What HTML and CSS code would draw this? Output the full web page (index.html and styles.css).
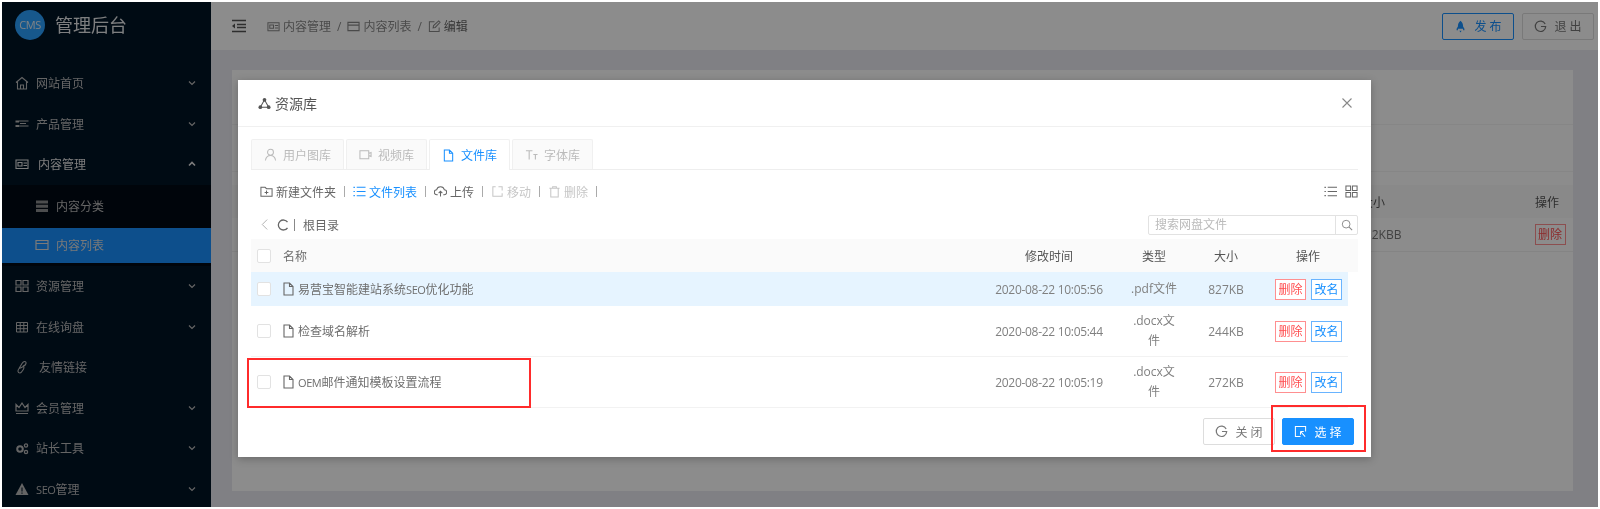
FILE: index.html
```html
<!DOCTYPE html>
<html lang="zh-CN">
<head>
<meta charset="utf-8">
<title>资源库</title>
<link rel="stylesheet" href="styles.css">
</head>
<body>
<svg class="sprite" xmlns="http://www.w3.org/2000/svg">
  <symbol id="i-file" viewBox="2 0 11 14"><path d="M3 1h5.500L12 4.500V13H3zM8.500 1v3.500H12" fill="none" stroke="currentColor" stroke-width="1.100"/></symbol>
  <symbol id="i-down" viewBox="0 0 10 10"><path d="M2 3.500 5 6.500 8 3.500" fill="none" stroke="currentColor" stroke-width="1.200"/></symbol>
  <symbol id="i-up" viewBox="0 0 10 10"><path d="M2 6.500 5 3.500 8 6.500" fill="none" stroke="currentColor" stroke-width="1.600"/></symbol>
  <symbol id="i-box" viewBox="0 0 14 14"><path d="M1 3h12v8.500H1zM3 5.500h4v3.500H3zM8.500 6H12M8.500 8.500H12" fill="none" stroke="currentColor" stroke-width="1.100"/></symbol>
  <symbol id="i-table" viewBox="0 0 14 14"><path d="M1 2.500h12v9H1zM1 5.500h12" fill="none" stroke="currentColor" stroke-width="1.200"/></symbol>
  <symbol id="i-exit" viewBox="0 0 14 14"><path d="M12 4.200A5.600 5.600 0 1 0 12.600 7H7.500" fill="none" stroke="currentColor" stroke-width="1.300"/></symbol>
</svg>
<div class="app">
  <aside class="sider">
    <div class="brand">
      <span class="brand-logo">CMS</span>
      <span class="brand-name">管理后台</span>
    </div>
    <a class="nav-item">
      <svg class="nav-icon" viewBox="0 0 14 14"><path d="M1 6.500 7 1.500l6 5M2.500 5.500V13h9V5.500M5.500 13V9h3v4" fill="none" stroke="currentColor" stroke-width="1.100"/></svg>
      <span class="nav-label">网站首页</span>
      <svg class="nav-arrow"><use href="#i-down"/></svg>
    </a>
    <a class="nav-item">
      <svg class="nav-icon" viewBox="0 0 14 14"><path d="M.5 3.500h3.500v2H.5zM.5 8h3.500v2H.5z" fill="currentColor"/><path d="M4 4h9.500M5 6.500h6M4 9h9.500" stroke="currentColor" stroke-width="1.100"/></svg>
      <span class="nav-label">产品管理</span>
      <svg class="nav-arrow"><use href="#i-down"/></svg>
    </a>
    <a class="nav-item nav-open">
      <svg class="nav-icon"><use href="#i-box"/></svg>
      <span class="nav-label">内容管理</span>
      <svg class="nav-arrow"><use href="#i-up"/></svg>
    </a>
    <div class="submenu">
      <a class="sub-item">
        <svg class="nav-icon" viewBox="0 0 14 14"><path d="M1 1.500h12v3H1zM1 5.700h12v3H1zM1 9.900h12v3H1z" fill="currentColor" opacity=".75"/></svg>
        <span>内容分类</span>
      </a>
      <a class="sub-item sub-active">
        <svg class="nav-icon"><use href="#i-table"/></svg>
        <span>内容列表</span>
      </a>
    </div>
    <a class="nav-item">
      <svg class="nav-icon" viewBox="0 0 14 14"><path d="M1 1.500h5v4.500H1zM8 1.500h5v4.500H8zM1 8h5v4.500H1zM8 8h5v4.500H8z" fill="none" stroke="currentColor" stroke-width="1.200"/></svg>
      <span class="nav-label">资源管理</span>
      <svg class="nav-arrow"><use href="#i-down"/></svg>
    </a>
    <a class="nav-item">
      <svg class="nav-icon" viewBox="0 0 14 14"><path d="M1.500 2.500h11v9.500h-11zM1.500 5.500h11M1.500 8.700h11M5.200 2.500V12M8.800 2.500V12" fill="none" stroke="currentColor"/></svg>
      <span class="nav-label">在线询盘</span>
      <svg class="nav-arrow"><use href="#i-down"/></svg>
    </a>
    <a class="nav-item nav-link">
      <svg class="nav-icon" viewBox="0 0 14 14"><path d="M5 13c-2.500 0-2.500-2.500-1-4.500l3-5C8.500 1 11.500.8 11 3.500 10.500 5.500 6.500 8 4 8.500M8 5.500c1.500 1 1 3-.2 4.800C6.800 12 6 13 5 13" fill="none" stroke="currentColor" stroke-width="1.100"/></svg>
      <span class="nav-label">友情链接</span>
    </a>
    <a class="nav-item">
      <svg class="nav-icon" viewBox="0 0 14 14"><path d="M1 3.500 4 6.500 7 2l3 4.500 3-3V10H1zM1 12.500h12" fill="none" stroke="currentColor" stroke-width="1.200"/></svg>
      <span class="nav-label">会员管理</span>
      <svg class="nav-arrow"><use href="#i-down"/></svg>
    </a>
    <a class="nav-item">
      <svg class="nav-icon" viewBox="0 0 14 14"><circle cx="5" cy="8" r="2.800" fill="none" stroke="currentColor" stroke-width="2"/><circle cx="11" cy="4.500" r="1.600" fill="none" stroke="currentColor" stroke-width="1.300"/><circle cx="11" cy="11" r="1.600" fill="none" stroke="currentColor" stroke-width="1.300"/></svg>
      <span class="nav-label">站长工具</span>
      <svg class="nav-arrow"><use href="#i-down"/></svg>
    </a>
    <a class="nav-item">
      <svg class="nav-icon" viewBox="0 0 14 14"><path d="M7 1 13.500 13H.5z" fill="currentColor"/><path d="M7 5.500v4M7 10.500v1.200" stroke="#011425" stroke-width="1.100"/></svg>
      <span class="nav-label"><span class="latin">SEO</span>管理</span>
      <svg class="nav-arrow"><use href="#i-down"/></svg>
    </a>
  </aside>

  <div class="main">
    <header class="topbar">
      <svg class="menu-toggle" viewBox="0 0 16 14"><path d="M1 1.500h14M6 5.500h9M6 8.500h9M1 12.500h14" stroke="currentColor" stroke-width="1.400"/><path d="M4 4.500v5L1 7z" fill="currentColor"/></svg>
      <nav class="crumbs">
        <svg class="crumb-icon"><use href="#i-box"/></svg><span>内容管理</span>
        <span class="crumb-sep">/</span>
        <svg class="crumb-icon"><use href="#i-table"/></svg><span>内容列表</span>
        <span class="crumb-sep">/</span>
        <svg class="crumb-icon" viewBox="0 0 14 14"><path d="M12 8v4.500H1.500V2H7M5.500 8.500 6 6l5.500-5 1.500 1.500L7.800 8z" fill="none" stroke="currentColor" stroke-width="1.100"/></svg><span class="crumb-last">编辑</span>
      </nav>
      <div class="top-actions">
        <button class="btn btn-outline-primary">
          <svg class="btn-icon" viewBox="0 0 14 14"><path d="M7 .8C9 2.500 9.800 4.500 9.800 7v2.500H4.200V7C4.200 4.500 5 2.500 7 .8zM4.200 7 2.800 9.500v1.500h1.400M9.800 7l1.400 2.500v1.500H9.800M5.800 11.500 7 13.500l1.200-2z" fill="currentColor"/></svg>
          <span>发 布</span>
        </button>
        <button class="btn">
          <svg class="btn-icon"><use href="#i-exit"/></svg>
          <span>退 出</span>
        </button>
      </div>
    </header>
    <main class="page">
      <section class="card">
        <div class="card-band card-band-title"></div>
        <div class="card-band card-band-tools"></div>
        <div class="bg-table">
          <div class="bg-row bg-head"><span class="bg-size">大小</span><span class="bg-op">操作</span></div>
          <div class="bg-row"><span class="bg-size-val">272KBB</span><span class="bg-op bg-op-btn"><span class="mini mini-red">删除</span></span></div>
        </div>
      </section>
    </main>
  </div>

  <div class="mask">
    <div class="modal">
      <div class="modal-head">
        <svg class="modal-icon" viewBox="0 0 14 14"><circle cx="7" cy="3" r="2" fill="currentColor"/><circle cx="2.500" cy="11" r="2" fill="currentColor"/><circle cx="11.500" cy="11" r="2" fill="currentColor"/><path d="M7 3 2.500 11h9z" fill="none" stroke="currentColor" stroke-width="1.100"/></svg>
        <span class="modal-title">资源库</span>
        <svg class="modal-close" viewBox="0 0 12 12"><path d="M1.500 1.500l9 9M10.500 1.500l-9 9" stroke="currentColor" stroke-width="1.100"/></svg>
      </div>
      <div class="modal-body">
        <div class="tabs">
          <div class="tab tab-a">
            <svg class="tab-icon" viewBox="0 0 14 14"><circle cx="7" cy="4.500" r="3.200" fill="none" stroke="currentColor" stroke-width="1.100"/><path d="M1.500 13.500c.5-3.500 2.500-5.500 5.500-5.500s5 2 5.500 5.500" fill="none" stroke="currentColor" stroke-width="1.100"/></svg>
            <span>用户图库</span>
          </div>
          <div class="tab tab-b">
            <svg class="tab-icon" viewBox="0 0 14 14"><path d="M1 3h9.500v8.500H1zM10.500 6 13 4.800v4.400L10.500 8" fill="none" stroke="currentColor" stroke-width="1.100"/></svg>
            <span>视频库</span>
          </div>
          <div class="tab tab-b tab-active">
            <svg class="tab-icon"><use href="#i-file"/></svg>
            <span>文件库</span>
          </div>
          <div class="tab tab-b">
            <svg class="tab-icon" viewBox="0 0 14 14"><path d="M1 3h7M4.500 3v9.500M9 7h4.500M11.200 7v5.500" fill="none" stroke="currentColor" stroke-width="1.200"/></svg>
            <span>字体库</span>
          </div>
        </div>

        <div class="toolbar">
          <span class="tool">
            <svg class="tool-icon" viewBox="0 0 14 14"><path d="M1 2.500h4.500L7 4h6v8H1zM7 6v4M5 8h4" fill="none" stroke="currentColor" stroke-width="1.100"/></svg>新建文件夹
          </span><i class="tool-sep"></i>
          <span class="tool tool-on">
            <svg class="tool-icon" viewBox="0 0 14 14"><path d="M4 2.500h9.500M4 7h9.500M4 11.500h9.500" stroke="currentColor" stroke-width="1.100"/><path d="M.5 2h1.500v1.200H.5zM.5 6.400h1.500v1.200H.5zM.5 10.900h1.500v1.200H.5z" fill="currentColor"/></svg>文件列表
          </span><i class="tool-sep"></i>
          <span class="tool">
            <svg class="tool-icon" viewBox="0 0 14 14"><path d="M4 10.500H3.200a2.700 2.700 0 0 1-.3-5.400 4.200 4.200 0 0 1 8.200 0 2.700 2.700 0 0 1-.3 5.400H10M7 12.500V7M5 8.800 7 6.800l2 2" fill="none" stroke="currentColor" stroke-width="1.100"/></svg>上传
          </span><i class="tool-sep"></i>
          <span class="tool tool-off">
            <svg class="tool-icon" viewBox="0 0 14 14"><path d="M5 2H2v10h10V9M8 2h4v4" fill="none" stroke="currentColor" stroke-width="1.100"/></svg>移动
          </span><i class="tool-sep"></i>
          <span class="tool tool-off">
            <svg class="tool-icon" viewBox="0 0 14 14"><path d="M1.500 3.500h11M5 3.500V2h4v1.500M3 3.500V13h8V3.500" fill="none" stroke="currentColor" stroke-width="1.100"/></svg>删除
          </span><i class="tool-sep"></i>
          <span class="view-switch">
            <svg class="view-icon" viewBox="0 0 14 14"><path d="M4 2.500h10M4 7h10M4 11.500h10" stroke="currentColor" stroke-width="1.100"/><path d="M.5 2h1.500v1.200H.5zM.5 6.400h1.500v1.200H.5zM.5 10.900h1.500v1.200H.5z" fill="currentColor"/></svg>
            <svg class="view-icon" viewBox="0 0 14 14"><path d="M1 1h5v5H1zM8 1h5v5H8zM1 8h5v5H1zM8 8h5v5H8z" fill="none" stroke="currentColor" stroke-width="1.100"/></svg>
          </span>
        </div>

        <div class="pathbar">
          <svg class="path-back" viewBox="0 0 10 14"><path d="M8 1.500 2.500 7 8 12.500" fill="none" stroke="currentColor"/></svg>
          <svg class="path-reload" viewBox="0 0 12 12"><path d="M10.500 3.200A5 5 0 1 0 10.500 8.800" fill="none" stroke="currentColor" stroke-width="1.300"/></svg>
          <i class="path-sep"></i>
          <span class="path-name">根目录</span>
          <div class="search">
            <span class="search-input">搜索网盘文件</span>
            <span class="search-btn"><svg class="search-icon" viewBox="0 0 14 14"><circle cx="6" cy="6" r="4.500" fill="none" stroke="currentColor" stroke-width="1.100"/><path d="M9.500 9.500 13 13" stroke="currentColor" stroke-width="1.200"/></svg></span>
          </div>
        </div>

        <div class="t-head">
          <span class="cell-check"><i class="check"></i></span>
          <span class="cell-name">名称</span>
          <span class="cell-c">修改时间</span>
          <span class="cell-c">类型</span>
          <span class="cell-c">大小</span>
          <span class="cell-c">操作</span>
        </div>
        <div class="t-row t-row-on">
          <span class="cell-check"><i class="check"></i></span>
          <span class="cell-name"><svg class="file-icon"><use href="#i-file"/></svg><span>易营宝智能建站系统<span class="latin">SEO</span>优化功能</span></span>
          <span class="cell-c cell-date">2020-08-22 10:05:56</span>
          <span class="cell-c cell-type">.pdf文件</span>
          <span class="cell-c">827KB</span>
          <span class="cell-ops"><span class="mini mini-red">删除</span><span class="mini mini-blue">改名</span></span>
        </div>
        <div class="t-row t-row-tall">
          <span class="cell-check"><i class="check"></i></span>
          <span class="cell-name"><svg class="file-icon"><use href="#i-file"/></svg><span>检查域名解析</span></span>
          <span class="cell-c cell-date">2020-08-22 10:05:44</span>
          <span class="cell-c cell-type">.docx文件</span>
          <span class="cell-c">244KB</span>
          <span class="cell-ops"><span class="mini mini-red">删除</span><span class="mini mini-blue">改名</span></span>
        </div>
        <div class="t-row t-row-tall">
          <span class="cell-check"><i class="check"></i></span>
          <span class="cell-name"><svg class="file-icon"><use href="#i-file"/></svg><span><span class="latin">OEM</span>邮件通知模板设置流程</span></span>
          <span class="cell-c cell-date">2020-08-22 10:05:19</span>
          <span class="cell-c cell-type">.docx文件</span>
          <span class="cell-c">272KB</span>
          <span class="cell-ops"><span class="mini mini-red">删除</span><span class="mini mini-blue">改名</span></span>
        </div>
      </div>
      <div class="modal-foot">
        <button class="btn">
          <svg class="btn-icon"><use href="#i-exit"/></svg>
          <span>关 闭</span>
        </button>
        <button class="btn btn-primary">
          <svg class="btn-icon" viewBox="0 0 14 14"><path d="M12.500 7V1.500h-11v11H7M7 7l5 5.500M7 7h3.500M7 7v3.500" fill="none" stroke="currentColor" stroke-width="1.100"/></svg>
          <span>选 择</span>
        </button>
      </div>
    </div>
    <div class="mark mark-row"></div>
    <div class="mark mark-btn"></div>
  </div>
</div>
</body>
</html>
```

FILE: styles.css
```css
* { box-sizing: border-box; }
html, body { margin: 0; padding: 0; background: #fff; }
body {
  width: 1600px;
  height: 509px;
  overflow: hidden;
  padding: 2px;
  font-family: "Open Sans", "Noto Sans CJK SC", sans-serif;
  font-size: 12px;
  color: #666;
}
.sprite { display: none; }
svg { display: block; flex: none; }
.latin { font-size: 11px; letter-spacing: -.4px; }

.app {
  position: relative;
  display: flex;
  width: 1596px;
  height: 505px;
  overflow: hidden;
  background: #e9eaf0;
  filter: blur(.6px);
}

/* sidebar */
.sider { width: 209px; flex: none; background: #011425; color: #b8b8b8; }
.brand { height: 61px; padding: 8px 0 0 13px; display: flex; align-items: flex-start; gap: 10px; }
.brand-logo {
  width: 30px; height: 30px; border-radius: 50%;
  background: #2aa0ff; color: #e6ecf2;
  font-size: 11px; line-height: 30px; text-align: center;
  letter-spacing: -.4px;
}
.brand-name { font-size: 18px; line-height: 30px; color: #fff; opacity: .9; }
.nav-item {
  height: 40.5px; padding: 0 14px 0 13px;
  display: flex; align-items: center; gap: 7px;
}
.nav-icon { width: 14px; height: 14px; }
.nav-label { flex: 1; }
.nav-arrow { width: 10px; height: 10px; }
.nav-open { color: #e4e4e4; gap: 9px; }
.nav-link .nav-label { padding-left: 3px; }
.submenu { height: 81.5px; background: #000a14; padding-bottom: 3px; }
.sub-item { height: 43px; padding-left: 33px; display: flex; align-items: center; gap: 7px; }
.sub-active { height: 35px; background: #1890ff; color: #dcdcdc; }

/* top of page */
.main { flex: 1; min-width: 0; display: flex; flex-direction: column; }
.topbar {
  height: 48px; flex: none; background: #fff;
  display: flex; align-items: center; padding: 0 4px 0 20px;
  color: #666;
}
.menu-toggle { width: 16px; height: 14px; color: #555; }
.crumbs { display: flex; align-items: center; margin-left: 20px; gap: 2px; color: #888; }
.crumb-icon { width: 13px; height: 13px; margin-right: 1px; }
.crumb-sep { margin: 0 4px; color: #888; }
.crumb-last { color: #666; }
.top-actions { margin-left: auto; display: flex; gap: 8px; }

.btn {
  width: 72px; height: 27px; padding: 0;
  display: inline-flex; align-items: center; justify-content: center; gap: 7px;
  background: #fff; color: #777;
  border: 1px solid #ddd; border-radius: 2px;
  font: inherit; font-size: 12px;
}
.btn-icon { width: 13px; height: 13px; }
.btn-outline-primary { color: #1890ff; border-color: #1890ff; }
.btn-primary { background: #1890ff; border-color: #1890ff; color: #fff; }

.page { flex: 1; padding: 20px 25px 16px 21px; }
.card { height: 100%; background: #fff; }
.card-band-title { height: 55px; border-bottom: 1px solid #f4f4f4; }
.card-band-tools { height: 47px; border-bottom: 1px solid #f4f4f4; }
.bg-table { margin-top: 13px; }
.bg-row { display: flex; align-items: center; height: 34px; border-bottom: 1px solid #f0f0f0; color: #777; }
.bg-head { height: 33px; background: #fafafa; color: #555; border-bottom: none; }
.bg-size { margin-left: 1129px; width: 160px; }
.bg-size-val { margin-left: 1126px; width: 163px; }
.bg-op { width: 52px; display: flex; justify-content: center; }
.bg-op-btn { padding-left: 6px; }

/* dialog */
.mask {
  position: absolute; inset: 0;
  background: rgba(0, 0, 0, .45);
  padding: 78px 0 0 236px;
}
.modal {
  width: 1133px; height: 377px; background: #fff;
  display: flex; flex-direction: column;
  box-shadow: 0 2px 8px rgba(0, 0, 0, .25);
}
.modal-head {
  height: 47px; flex: none; border-bottom: 1px solid #f0f0f0;
  display: flex; align-items: center; padding: 0 18px 0 20px; color: #555;
}
.modal-icon { width: 13px; height: 13px; margin-right: 4px; }
.modal-title { flex: 1; font-size: 14px; }
.modal-close { width: 12px; height: 12px; color: #888; }
.modal-body { padding: 12px 13px 0; flex: none; height: 281px; }

.tabs { display: flex; gap: 2px; height: 31px; border-bottom: 1px solid #eee; }
.tab {
  height: 30px; display: flex; align-items: center; justify-content: center; gap: 6px;
  background: #fafafa; border: 1px solid #f0f0f0; border-bottom: none;
  color: #bbb; border-radius: 2px 2px 0 0;
}
.tab-a { width: 93px; }
.tab-b { width: 81px; }
.tab-icon { width: 13px; height: 13px; }
.tab-active { height: 31px; background: #fff; color: #1890ff; }

.toolbar { height: 43px; display: flex; align-items: center; padding-left: 9px; color: #666; }
.tool { display: inline-flex; align-items: center; gap: 3px; }
.tool-icon { width: 13px; height: 13px; }
.tool-on { color: #1890ff; }
.tool-off { color: #c6c6c6; }
.tool-sep { width: 1px; height: 11px; background: #aaa; margin: 0 8px; }
.view-switch { margin-left: auto; display: flex; gap: 8px; color: #666; }
.view-icon { width: 13px; height: 13px; }

.pathbar { height: 23px; margin-bottom: 3px; display: flex; align-items: center; padding-left: 9px; color: #666; }
.path-back { width: 9px; height: 13px; color: #aaa; }
.path-reload { width: 12px; height: 12px; margin-left: 8px; }
.path-sep { width: 1px; height: 12px; background: #888; margin: 0 8px 0 5px; }
.search {
  margin-left: auto; width: 210px; height: 20px;
  display: flex; border: 1px solid #e2e2e2; border-radius: 2px;
}
.search-input { flex: 1; padding-left: 6px; line-height: 18px; color: #bbb; }
.search-btn { width: 22px; border-left: 1px solid #e2e2e2; display: flex; align-items: center; justify-content: center; color: #888; }
.search-icon { width: 12px; height: 12px; }

.t-head, .t-row {
  display: grid;
  grid-template-columns: 32px 1fr 130px 80px 64px 100px;
  align-items: center;
}
.t-head { height: 33px; background: #fafafa; color: #555; }
.t-row {
  width: 1097px; height: 51px;
  grid-template-columns: 32px 1fr 130px 80px 64px 90px;
  border-bottom: 1px solid #f2f2f2; color: #808080;
}
.t-row-on { height: 34px; background: #e6f4ff; border-bottom: none; }
.t-row-tall { height: 51px; }
.cell-check { padding-left: 6px; }
.check { display: block; width: 14px; height: 14px; background: #fff; border: 1px solid #e2e2e2; border-radius: 2px; }
.cell-name { display: flex; align-items: center; gap: 4px; color: #6e6e6e; }
.cell-c { text-align: center; }
.cell-date { letter-spacing: -.3px; }
.cell-type { padding: 0 16px; line-height: 20px; }
.file-icon { width: 11px; height: 14px; color: #666; }
.cell-ops { display: flex; gap: 5px; padding-left: 17px; }
.mini {
  display: inline-block; width: 31px; height: 21px; line-height: 19px; text-align: center;
  border: 1px solid; font-size: 12px; background: #fff;
}
.mini-red { color: #ff4d4f; border-color: #ff8f90; }
.mini-blue { color: #1890ff; border-color: #69b4ff; }

.modal-foot { flex: 1; display: flex; justify-content: flex-end; gap: 7px; padding: 10px 17px 0 0; }

.mark { position: absolute; border: 2px solid #ff2b2b; }
.mark-row { left: 245px; top: 356px; width: 284px; height: 50px; }
.mark-btn { left: 1269px; top: 403px; width: 95px; height: 47px; }
```
